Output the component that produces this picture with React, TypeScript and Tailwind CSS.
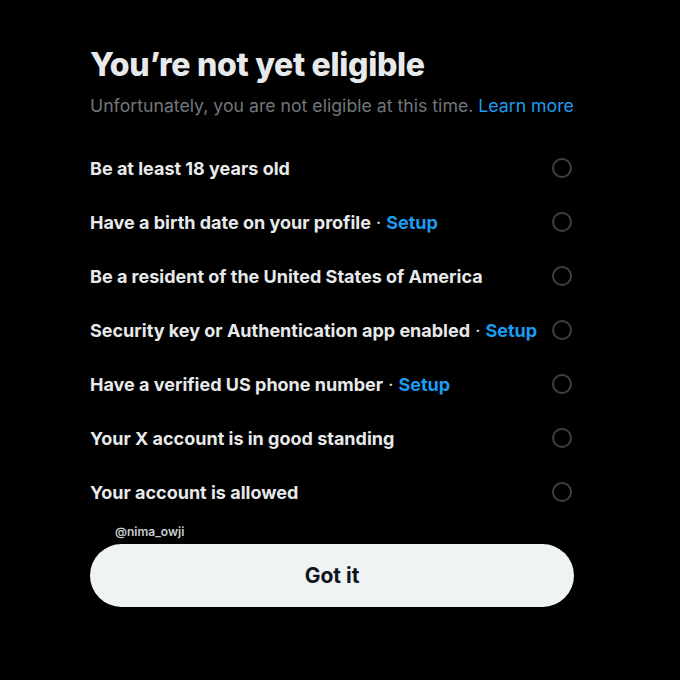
import React from "react";

const rows: { text: string; setup?: boolean }[] = [
  { text: "Be at least 18 years old" },
  { text: "Have a birth date on your profile", setup: true },
  { text: "Be a resident of the United States of America" },
  { text: "Security key or Authentication app enabled", setup: true },
  { text: "Have a verified US phone number", setup: true },
  { text: "Your X account is in good standing" },
  { text: "Your account is allowed" },
];

export default function App() {
  return (
    <div
      className="w-[680px] h-[680px] bg-black pl-[90px]"
      style={{ fontFamily: "Inter, 'Noto Sans', sans-serif" }}
    >
      <div className="w-[484px] flex flex-col pt-[45px]">
        <h1 className="text-[32px] leading-[40px] font-extrabold text-[#e7e9ea] tracking-[-0.3px]">
          You’re not yet eligible
        </h1>
        <p className="mt-[10px] text-[17.7px] leading-[22px] text-[#71767b] whitespace-nowrap">
          Unfortunately, you are not eligible at this time.{" "}
          <span className="text-[#1d9bf0]">Learn more</span>
        </p>
        <div className="mt-[24px] flex flex-col">
          {rows.map((r) => (
            <div key={r.text} className="h-[54px] flex items-center justify-between">
              <span className="text-[18px] font-bold text-[#e7e9ea] whitespace-nowrap">
                {r.text}
                {r.setup && (
                  <>
                    <span className="font-normal"> · </span>
                    <span className="text-[#1d9bf0]">Setup</span>
                  </>
                )}
              </span>
              <div className="w-[20px] h-[20px] rounded-full border-2 border-[#3e4144] mr-[2px] shrink-0" />
            </div>
          ))}
        </div>
        <div className="text-[12px] leading-[20px] font-semibold text-[#c9cccf] pl-[25px] mt-[3px] h-[22px]">
          @nima_owji
        </div>
        <button className="h-[63px] w-full rounded-full bg-[#eff3f4] text-[#0f1419] text-[21px] font-bold">
          Got it
        </button>
      </div>
    </div>
  );
}
